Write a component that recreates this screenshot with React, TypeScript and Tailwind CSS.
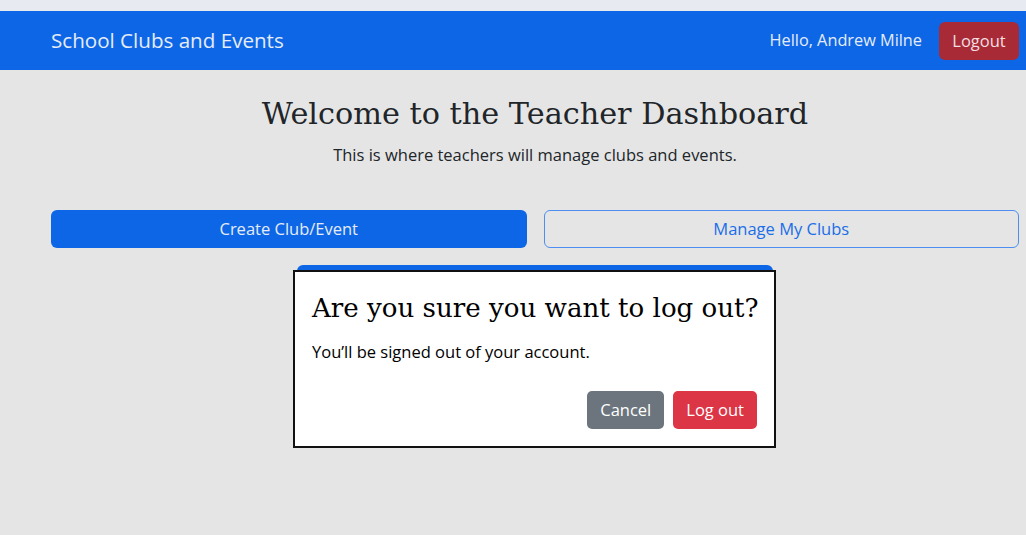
import React from "react";

export default function App() {
  const sans = { fontFamily: '"Open Sans", "Liberation Sans", sans-serif' };
  const serif = { fontFamily: '"DejaVu Serif", "Liberation Serif", serif' };
  return (
    <div className="relative w-[1026px] h-[535px] overflow-hidden bg-[#e5e5e5]" style={sans}>
      <div className="h-[11px] bg-[#e8eaf1]" />
      <nav className="h-[59px] bg-[#0d66e6] flex items-center justify-between pl-[51px] pr-[7px]">
        <span className="text-[20.6px] text-[#e6ecf7] leading-none">School Clubs and Events</span>
        <div className="flex items-center gap-[17px]">
          <span className="text-[16.3px] text-[#e6ecf7]">Hello, Andrew Milne</span>
          <button className="h-[38px] w-[80px] rounded-[6px] bg-[#a82a36] text-[#f1dfe1] text-[16.5px] pt-[1px]">Logout</button>
        </div>
      </nav>
      <main className="pl-[51px] pr-[7px]">
        <h1 className="text-center text-[30.3px] leading-none text-[#212529] mt-[29px]" style={serif}>
          Welcome to the Teacher Dashboard
        </h1>
        <p className="text-center text-[16.5px] text-[#212529] mt-[14px]">This is where teachers will manage clubs and events.</p>
        <div className="grid grid-cols-2 gap-[17px] mt-[42px]">
          <button className="h-[38px] rounded-[6px] bg-[#0d66e6] text-[#e6ecf7] text-[16.5px] pt-[1px]">Create Club/Event</button>
          <button className="h-[38px] rounded-[6px] border border-[#4d8ef0] text-[#1a6ee8] text-[16.5px] pt-[1px]">Manage My Clubs</button>
        </div>
        <div className="mx-auto mt-[17px] w-[476px] h-[10px] rounded-t-[6px] bg-[#0d66e6]" />
      </main>
      <div className="absolute left-[293px] top-[270px] w-[483px] h-[178px] bg-white border-2 border-[#111] px-[17px] pt-[16px]">
        <h2 className="text-[26.1px] leading-[40px] text-black whitespace-nowrap" style={serif}>Are you sure you want to log out?</h2>
        <p className="text-[16.5px] text-black mt-[12px]">You’ll be signed out of your account.</p>
        <div className="flex justify-end gap-[9px] mt-[26px]">
          <button className="h-[38px] px-[13px] rounded-[5px] bg-[#6c757d] text-white text-[16.5px] pt-[1px]">Cancel</button>
          <button className="h-[38px] px-[13px] rounded-[5px] bg-[#dc3545] text-white text-[16.5px] pt-[1px]">Log out</button>
        </div>
      </div>
    </div>
  );
}
